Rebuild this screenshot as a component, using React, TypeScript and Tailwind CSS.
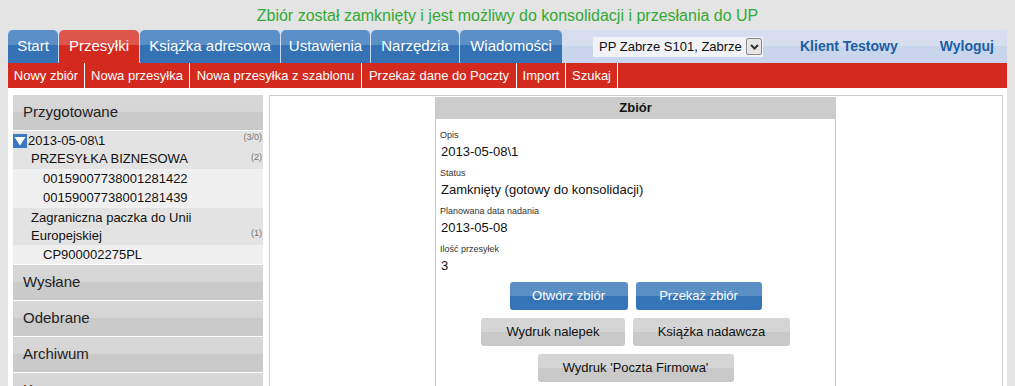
import React from "react";

const tabs = [
  { label: "Start", w: "w-[50px]" },
  { label: "Przesyłki", w: "w-[80px]", active: true },
  { label: "Książka adresowa", w: "w-[140px]" },
  { label: "Ustawienia", w: "w-[89px]" },
  { label: "Narzędzia", w: "w-[88px]" },
  { label: "Wiadomości", w: "w-[102px]" },
];

const subnav = [
  { label: "Nowy zbiór", w: "w-[77px]" },
  { label: "Nowa przesyłka", w: "w-[105px]" },
  { label: "Nowa przesyłka z szablonu", w: "w-[172px]" },
  { label: "Przekaż dane do Poczty", w: "w-[155px]" },
  { label: "Import", w: "w-[49px]" },
  { label: "Szukaj", w: "w-[52px]" },
];

function SideHeader({ label }: { label: string }) {
  return (
    <div className="h-[35px] bg-[linear-gradient(#d9d8d8_0%,#d6d5d5_50%,#cbcaca_50%,#cbcaca_100%)] flex items-center pl-[10px] text-[15px] text-[#222] mb-[1px]">
      {label}
    </div>
  );
}

function Row({
  label,
  indent,
  light,
  count,
  h = "h-[19px]",
}: {
  label: React.ReactNode;
  indent: string;
  light?: boolean;
  count?: string;
  h?: string;
}) {
  return (
    <div className={`${h} ${light ? "bg-[#f0f0f0]" : "bg-[#e3e3e3]"} flex items-start justify-between ${indent} text-[13px] text-[#111] leading-[19px]`}>
      <div>{label}</div>
      {count && <span className="text-[9px] text-[#777] pr-[1px] self-end leading-[24px]">{count}</span>}
    </div>
  );
}

function Field({ label, value }: { label: string; value: string }) {
  return (
    <div className="mb-[2px]">
      <div className="text-[9px] text-[#333] leading-[12px] h-[14px] flex items-end">{label}</div>
      <div className="text-[13px] text-[#111] leading-[22px] pl-[1px]">{value}</div>
    </div>
  );
}

function BlueBtn({ label, w }: { label: string; w: string }) {
  return (
    <div className={`${w} h-[28px] rounded-[3px] bg-[linear-gradient(#5b90c7_0%,#5b90c7_50%,#3574b6_50%,#3574b6_100%)] text-white text-[13px] flex items-center justify-center`}>
      {label}
    </div>
  );
}

function GrayBtn({ label, w }: { label: string; w: string }) {
  return (
    <div className={`${w} h-[28px] rounded-[3px] bg-[linear-gradient(#d5d5d5_0%,#d5d5d5_50%,#c9c9c9_50%,#c9c9c9_100%)] text-[#111] text-[13px] flex items-center justify-center`}>
      {label}
    </div>
  );
}

export default function App() {
  return (
    <div className="w-[1015px] h-[386px] overflow-hidden bg-[#e4e4e4] font-['Liberation_Sans',Arial,sans-serif]">
      <div className="h-[30px] flex items-center justify-center text-[16px] text-[#33aa33] pt-[1px]">
        Zbiór został zamknięty i jest możliwy do konsolidacji i przesłania do UP
      </div>
      <div className="mx-[8px] bg-white h-[356px]">
        {/* tab bar */}
        <div className="h-[33px] bg-[linear-gradient(#d6def0_0%,#d6def0_50%,#c9d5ea_50%,#c9d5ea_100%)] flex items-stretch">
          <div className="flex gap-[1px]">
            {tabs.map((t) => (
              <div
                key={t.label}
                className={`${t.w} rounded-t-[5px] text-white text-[15px] flex items-center justify-center ${
                  t.active
                    ? "bg-[linear-gradient(#dd554b_0%,#dd554b_45%,#d42a1e_45%,#d42a1e_100%)]"
                    : "bg-[linear-gradient(#5b8fc7_0%,#5b8fc7_45%,#3572b5_45%,#3572b5_100%)]"
                }`}
              >
                {t.label}
              </div>
            ))}
          </div>
          <div className="ml-[31px] flex items-center">
            <div className="w-[170px] h-[20px] bg-[#f2f3f7] flex items-center justify-between pl-[6px] pr-[1px]">
              <span className="text-[13px] text-[#111] whitespace-nowrap">PP Zabrze S101, Zabrze</span>
              <span className="w-[16px] h-[17px] border border-[#8a8a8a] bg-[#e6e6e6] rounded-[2px] flex items-center justify-center">
                <svg width="9" height="6" viewBox="0 0 9 6">
                  <path d="M1 1 L4.5 4.5 L8 1" stroke="#333" strokeWidth="2" fill="none" />
                </svg>
              </span>
            </div>
          </div>
          <div className="ml-[37px] flex items-center text-[14px] font-bold text-[#1b5ea6]">Klient Testowy</div>
          <div className="ml-[42px] flex items-center text-[14px] font-bold text-[#1b5ea6]">Wyloguj</div>
        </div>
        {/* sub navigation */}
        <div className="h-[25px] bg-[#d42a1e] flex">
          {subnav.map((s) => (
            <div key={s.label} className={`${s.w} border-r border-white text-white text-[13px] flex items-center justify-center whitespace-nowrap`}>
              {s.label}
            </div>
          ))}
        </div>
        {/* body */}
        <div className="flex pt-[7px] pl-[5px] gap-[6px]">
          <div className="w-[250px] shrink-0">
            <SideHeader label="Przygotowane" />
            <Row
              indent="pl-0"
              h="h-[18px]"
              count="(3/0)"
              label={
                <span className="flex items-center">
                  <span className="w-[14px] h-[14px] bg-[#3a78c0] flex items-center justify-center mr-[1px]">
                    <svg width="12" height="10" viewBox="0 0 12 10">
                      <path d="M0.5 1 L11.5 1 L6 9.5 Z" fill="white" />
                    </svg>
                  </span>
                  2013-05-08\1
                </span>
              }
            />
            <Row indent="pl-[18px]" h="h-[20px]" count="(2)" label="PRZESYŁKA BIZNESOWA" />
            <Row indent="pl-[30px]" h="h-[19px]" light label="00159007738001281422" />
            <Row indent="pl-[30px]" h="h-[20px]" light label="00159007738001281439" />
            <div className="h-[37px] bg-[#e3e3e3] flex justify-between items-end pl-[18px] text-[13px] text-[#111] leading-[18px] pt-[1px]">
              <div className="self-start">
                Zagraniczna paczka do Unii
                <br />
                Europejskiej
              </div>
              <span className="text-[9px] text-[#777] pr-[1px] leading-[24px]">(1)</span>
            </div>
            <Row indent="pl-[30px]" h="h-[19px]" light label="CP900002275PL" />
            <div className="h-[1px]" />
            <SideHeader label="Wysłane" />
            <SideHeader label="Odebrane" />
            <SideHeader label="Archiwum" />
            <SideHeader label="Kosz" />
          </div>
          <div className="w-[734px] h-[300px] border border-[#cccccc] flex justify-center pt-[1px]">
            <div className="w-[401px] h-[300px] border border-[#cccccc] border-t-0 mr-[1px]">
              <div className="h-[22px] bg-[#cccccc] flex items-center justify-center text-[13px] font-bold text-[#111]">Zbiór</div>
              <div className="px-[4px] pt-[8px]">
                <Field label="Opis" value="2013-05-08\1" />
                <Field label="Status" value="Zamknięty (gotowy do konsolidacji)" />
                <Field label="Planowana data nadania" value="2013-05-08" />
                <Field label="Ilość przesyłek" value="3" />
              </div>
              <div className="flex flex-col items-center gap-[8px] pt-[3px]">
                <div className="flex gap-[8px]">
                  <BlueBtn label="Otwórz zbiór" w="w-[118px]" />
                  <BlueBtn label="Przekaż zbiór" w="w-[126px]" />
                </div>
                <div className="flex gap-[8px]">
                  <GrayBtn label="Wydruk nalepek" w="w-[144px]" />
                  <GrayBtn label="Książka nadawcza" w="w-[157px]" />
                </div>
                <GrayBtn label="Wydruk 'Poczta Firmowa'" w="w-[196px]" />
              </div>
            </div>
          </div>
        </div>
      </div>
    </div>
  );
}
